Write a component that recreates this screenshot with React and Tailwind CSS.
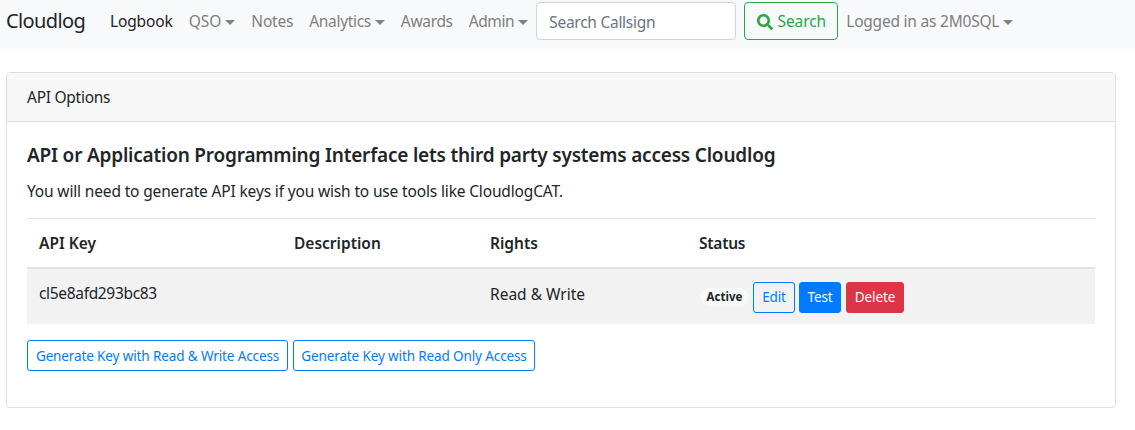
import React from "react";
import { FaSearch } from "react-icons/fa";

const Caret = () => (
  <span className="ml-[4px] inline-block w-0 h-0 align-[2px] border-x-[5px] border-x-transparent border-t-[5px] border-t-[#808080]" />
);

const NavItem = ({ children, caret, active, className = "" }) => (
  <a className={`block whitespace-nowrap ${active ? "text-[#1f2326]" : "text-[#7f7f7f]"} ${className}`}>
    {children}
    {caret && <Caret />}
  </a>
);

const Btn = ({ children, className = "" }) => (
  <button className={`h-[31px] rounded-[3px] border border-[#007bff] text-[13.5px] tracking-[-0.12px] leading-[20px] whitespace-nowrap ${className}`}>
    {children}
  </button>
);

export default function App() {
  return (
    <div className="min-h-[430px] bg-white text-[15.5px] text-[#212529] font-['Noto_Sans','Liberation_Sans',sans-serif]">
      <nav className="h-[49px] bg-[#f8f9fa] flex items-start pl-[6px]">
        <a className="text-[20px] tracking-[-0.6px] leading-[42px] text-[#1f2326] w-[104px]">Cloudlog</a>
        <div className="flex leading-[42px] gap-[16px]">
          <NavItem active className="tracking-[-0.14px]">Logbook</NavItem>
          <NavItem caret>QSO</NavItem>
          <NavItem className="tracking-[-0.2px]">Notes</NavItem>
          <NavItem caret className="tracking-[-0.33px]">Analytics</NavItem>
          <NavItem className="tracking-[-0.33px]">Awards</NavItem>
          <NavItem caret className="tracking-[-0.4px]">Admin</NavItem>
        </div>
        <input
          placeholder="Search Callsign"
          className="ml-[8px] mt-[2px] w-[200px] h-[38px] rounded-[4px] border border-[#ced4da] bg-white px-[12px] pt-[1px] tracking-[-0.27px] placeholder:text-[#6c757d] outline-none"
        />
        <button className="ml-[8px] mt-[2px] w-[94px] h-[38px] rounded-[4px] border border-[#28a745] text-[#28a745] flex items-center justify-center gap-[5px] pt-[1px] tracking-[-0.1px]">
          <FaSearch className="text-[16px]" />
          Search
        </button>
        <NavItem caret className="ml-[8px] leading-[42px] tracking-[-0.22px]">Logged in as 2M0SQL</NavItem>
      </nav>

      <div className="mt-[23px] mx-[6px] w-[1110px] h-[336px] rounded-[4px] border border-[#dfdfdf]">
        <div className="h-[49px] bg-[#f7f7f7] border-b border-[#dfdfdf] px-[20px] pt-[2px] flex items-center rounded-t-[3px] tracking-[-0.27px]">
          API Options
        </div>
        <div className="px-[20px] pt-[21px]">
          <h5 className="text-[19px] tracking-[-0.2px] leading-[24px] font-semibold">
            API or Application Programming Interface lets third party systems access Cloudlog
          </h5>
          <p className="mt-[12px] leading-[24px] tracking-[-0.155px]">
            You will need to generate API keys if you wish to use tools like CloudlogCAT.
          </p>
          <div className="mt-[15px] border-t border-[#dee2e6]">
            <div className="grid grid-cols-[255px_196px_210px_1fr] h-[50px] items-center px-[12px] pt-[2px] font-semibold border-b-2 border-[#dee2e6]">
              <span>API Key</span>
              <span>Description</span>
              <span>Rights</span>
              <span className="tracking-[-0.25px] -ml-[1px]">Status</span>
            </div>
            <div className="grid grid-cols-[255px_196px_210px_1fr] h-[55px] px-[12px] bg-[#f2f2f2]">
              <span className="pt-[12px] leading-[24px] tracking-[-0.33px]">cl5e8afd293bc83</span>
              <span />
              <span className="pt-[13px] leading-[24px]">Read &amp; Write</span>
              <div className="flex items-center pt-[1px]">
                <span className="w-[49px] text-center rounded-full bg-[#f8f9fa] text-[11.5px] leading-[18px] font-bold mr-[4px]">Active</span>
                <Btn className="w-[42px] text-[#007bff]">Edit</Btn>
                <Btn className="w-[42px] ml-[4px] bg-[#007bff] text-white">Test</Btn>
                <Btn className="w-[58px] ml-[5px] bg-[#dc3545] border-[#dc3545] text-white">Delete</Btn>
              </div>
            </div>
          </div>
          <div className="mt-[16px] flex gap-[5px]">
            <Btn className="w-[261px] text-[#007bff]">Generate Key with Read &amp; Write Access</Btn>
            <Btn className="w-[242px] text-[#007bff]">Generate Key with Read Only Access</Btn>
          </div>
        </div>
      </div>
    </div>
  );
}
